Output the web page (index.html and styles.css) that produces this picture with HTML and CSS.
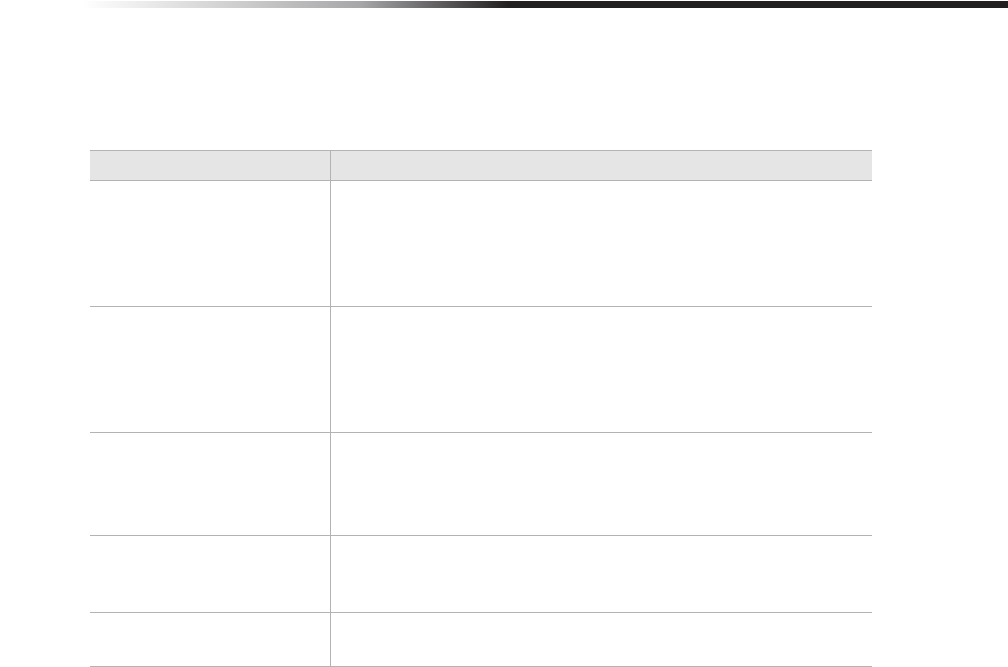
FILE: index.html
```html
<!DOCTYPE html>
<html lang="en">

<head>
    <meta charset="UTF-8">
    <title>Table</title>
    <link rel="stylesheet" href="styles.css">
</head>

<body>
    <div class="topbar"></div>
    <div class="page">
        <table class="grid">
            <thead>
                <tr class="head">
                    <th class="label"></th>
                    <th></th>
                </tr>
            </thead>
            <tbody>
                <tr class="r1">
                    <td class="label"></td>
                    <td></td>
                </tr>
                <tr class="r2">
                    <td class="label"></td>
                    <td></td>
                </tr>
                <tr class="r3">
                    <td class="label"></td>
                    <td></td>
                </tr>
                <tr class="r4">
                    <td class="label"></td>
                    <td></td>
                </tr>
                <tr class="r5">
                    <td class="label"></td>
                    <td></td>
                </tr>
            </tbody>
        </table>
    </div>
</body>

</html>
```

FILE: styles.css
```css
body {
    margin: 0;
    background: #fff;
    font-family: 'Liberation Sans', sans-serif;
}

.topbar {
    margin: 1px 0 0 82px;
    height: 7px;
    background: linear-gradient(to right, #ffffff 0%, #a7a7a9 30%, #231f20 46%, #231f20 100%);
}

.page {
    padding: 142px 0 0 90px;
}

.grid {
    width: 782px;
    border-collapse: collapse;
}

.grid th,
.grid td {
    padding: 0;
    border-bottom: 1px solid #b3b3b3;
}

.grid th {
    background: #e5e5e5;
    border-top: 1px solid #b3b3b3;
}

.grid .label {
    width: 240px;
    border-right: 1px solid #b3b3b3;
}

.head { height: 30px; }
.r1 { height: 126px; }
.r2 { height: 126px; }
.r3 { height: 103px; }
.r4 { height: 77px; }
.r5 { height: 54px; }
```
